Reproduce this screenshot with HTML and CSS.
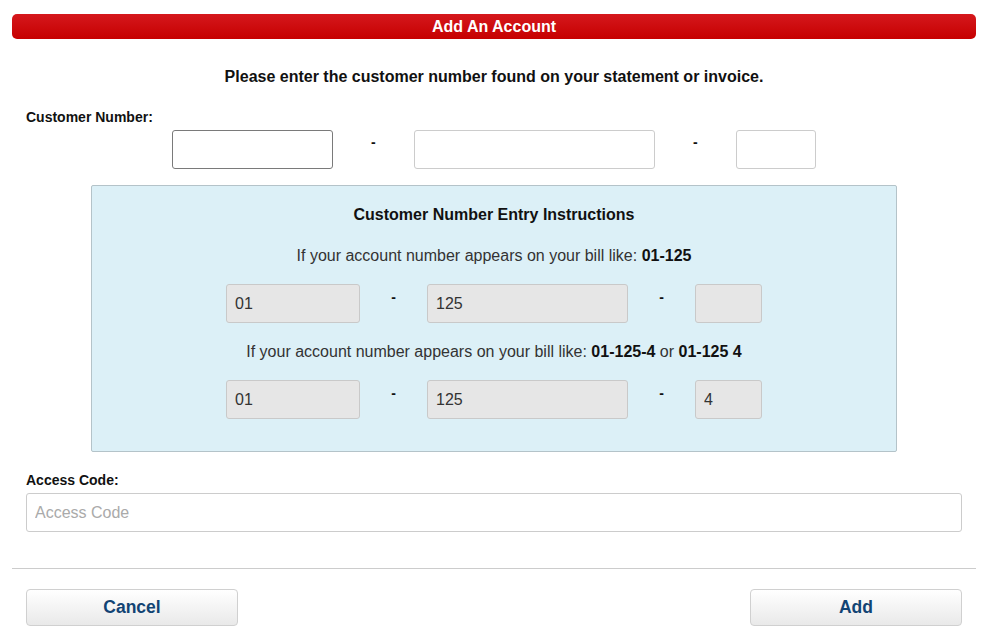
FILE: index.html
```
<!DOCTYPE html>
<html>
<head>
<meta charset="utf-8">
<link rel="stylesheet" href="styles.css">
</head>
<body>
<div class="page">
  <div class="header">Add An Account</div>
  <p class="intro">Please enter the customer number found on your statement or invoice.</p>
  <div class="section">
    <label class="label">Customer Number:</label>
    <div class="num-row main-row">
      <input class="field focused" type="text">
      <span class="dash">-</span>
      <input class="field" type="text">
      <span class="dash">-</span>
      <input class="field" type="text">
    </div>
    <div class="info">
      <div class="info-title">Customer Number Entry Instructions</div>
      <div class="info-line">If your account number appears on your bill like: <b>01-125</b></div>
      <div class="num-row info-row">
        <input class="field sample" type="text" value="01" readonly>
        <span class="dash">-</span>
        <input class="field sample" type="text" value="125" readonly>
        <span class="dash">-</span>
        <input class="field sample" type="text" value="" readonly>
      </div>
      <div class="info-line">If your account number appears on your bill like: <b>01-125-4</b> or <b>01-125 4</b></div>
      <div class="num-row info-row second">
        <input class="field sample" type="text" value="01" readonly>
        <span class="dash">-</span>
        <input class="field sample" type="text" value="125" readonly>
        <span class="dash">-</span>
        <input class="field sample" type="text" value="4" readonly>
      </div>
    </div>
    <label class="label access-label">Access Code:</label>
    <input class="field access" type="text" placeholder="Access Code">
  </div>
  <hr class="divider">
  <div class="actions">
    <button class="btn" type="button">Cancel</button>
    <button class="btn" type="button">Add</button>
  </div>
</div>
</body>
</html>
```
FILE: styles.css
```
html, body {
  margin: 0;
  padding: 0;
  background: #fff;
}
body {
  font-family: "Liberation Sans", Arial, sans-serif;
  color: #111;
}
.page {
  margin: 14px 7px 0 12px;
}
.header {
  height: 25px;
  line-height: 25px;
  border-radius: 5px;
  background: linear-gradient(#d5181d, #c60000);
  color: #fff;
  font-weight: bold;
  font-size: 16px;
  text-align: center;
}
.intro {
  margin: 29px 0 0;
  font-size: 16px;
  line-height: 18px;
  font-weight: bold;
  text-align: center;
}
.section {
  padding: 0 14px;
  display: flex;
  flex-direction: column;
}
.label {
  display: block;
  margin-top: 23px;
  font-size: 14px;
  line-height: 16px;
  font-weight: bold;
  color: #111;
}
.num-row {
  display: grid;
  grid-template-columns: 2fr 1fr 3fr 1fr 1fr;
  margin: 0 auto;
}
.main-row {
  width: 644px;
  margin-top: 5px;
}
.field {
  box-sizing: border-box;
  height: 39px;
  border: 1px solid #ccc;
  border-radius: 3px;
  background: #fff;
  font-family: "Liberation Sans", Arial, sans-serif;
  font-size: 16px;
  color: #333;
  padding: 0 8px;
  margin: 0;
  outline: none;
  width: 100%;
}
.field.focused {
  border-color: #7a7a7a;
}
.dash {
  text-align: center;
  font-size: 14px;
  line-height: 16px;
  font-weight: bold;
  padding-top: 4px;
  color: #111;
}
.info {
  box-sizing: border-box;
  width: 806px;
  margin: 16px auto 0;
  background: #dcf0f7;
  border: 1px solid #b4c3c9;
  border-radius: 2px;
  padding: 20px 0 32px;
  text-align: center;
  color: #333;
}
.info-title {
  font-size: 16px;
  line-height: 18px;
  font-weight: bold;
  color: #111;
}
.info-line {
  font-size: 16px;
  line-height: 18px;
  margin-top: 23px;
}
.info-line b {
  color: #111;
}
.info-row {
  width: 536px;
  margin-top: 19px;
  text-align: left;
}
.info-row.second {
  margin-top: 19px;
}
.info-row + .info-line {
  margin-top: 20px;
}
.info-row .dash {
  padding-top: 5px;
}
.field.sample {
  background: #e6e6e6;
  border-color: #c9c9c9;
}
.access-label {
  margin-top: 20px;
}
.field.access {
  margin-top: 5px;
}
.field.access::placeholder {
  color: #aaa;
}
.divider {
  margin: 36px 0 0;
  border: 0;
  border-top: 1px solid #ccc;
  height: 0;
}
.actions {
  display: flex;
  justify-content: space-between;
  padding: 0 14px;
  margin-top: 20px;
}
.btn {
  width: 212px;
  height: 37px;
  border: 1px solid #d0d0d0;
  border-radius: 4px;
  background: linear-gradient(#ffffff, #e9e9e9);
  color: #124474;
  font-family: "Liberation Sans", Arial, sans-serif;
  font-size: 17.5px;
  font-weight: bold;
  padding: 0;
}
```
